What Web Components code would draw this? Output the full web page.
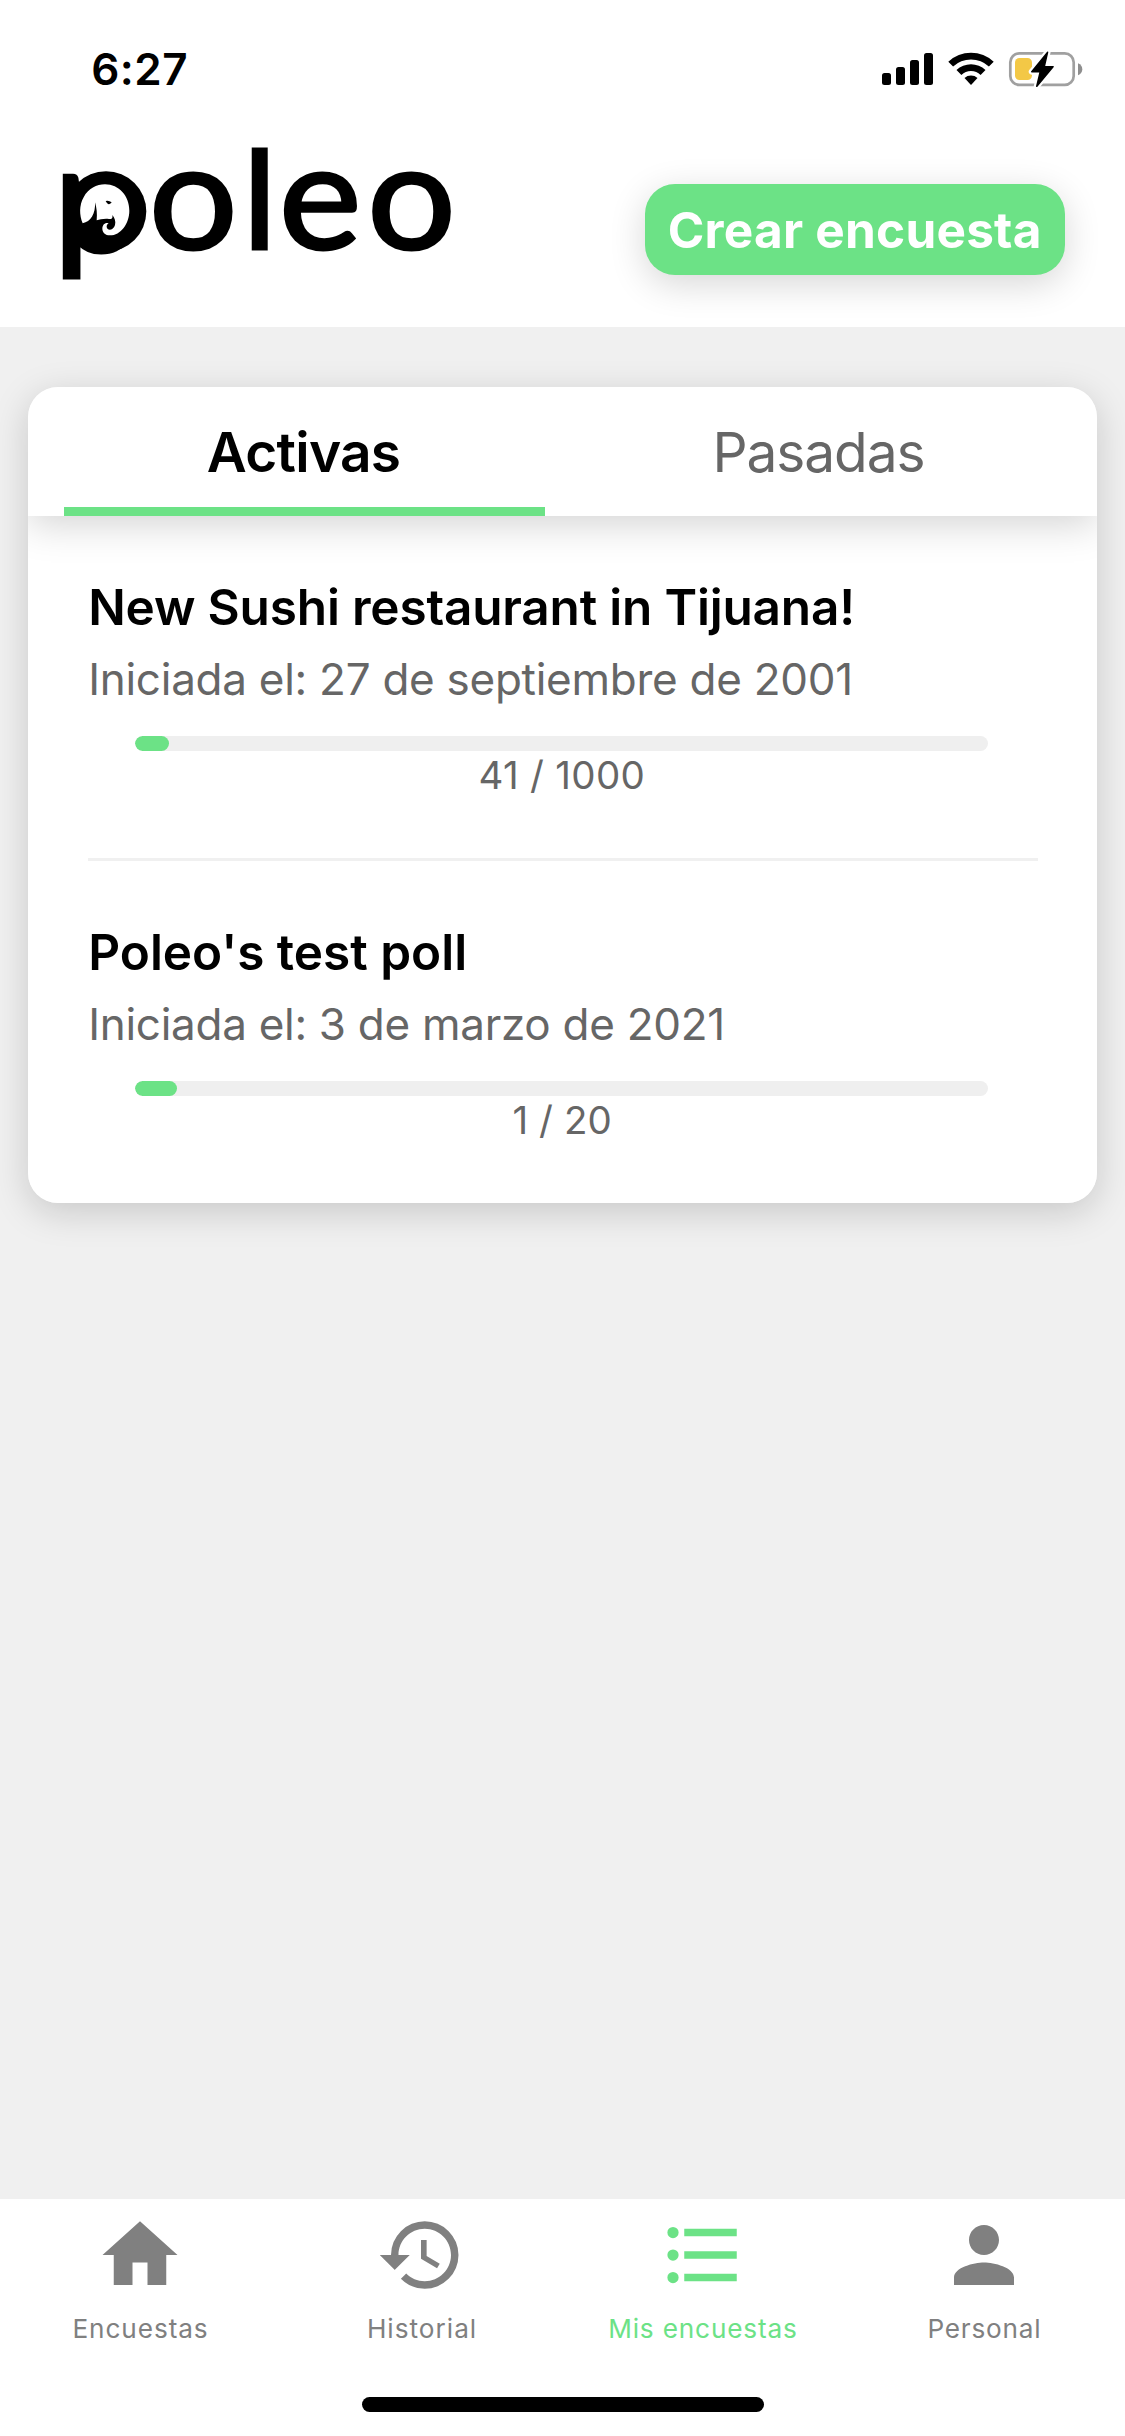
<!DOCTYPE html>
<html lang="es">
<head>
<meta charset="utf-8">
<title>Poleo</title>
<style>
  html, body { margin: 0; padding: 0; }
  body { width: 1125px; height: 2436px; overflow: hidden; background: #f0f0f0; font-family: Inter, "Liberation Sans", sans-serif; }
</style>
</head>
<body>
<poleo-app></poleo-app>
<script>
const pen = document.createElement('canvas').getContext('2d');
const FAMILY = 'Inter, "Liberation Sans", sans-serif';
const define = (name, html, connected) => {
  const tpl = document.createElement('template');
  tpl.innerHTML = html;
  customElements.define(name, class extends HTMLElement {
    constructor() {
      super();
      this.attachShadow({ mode: 'open' }).append(tpl.content.cloneNode(true));
    }
    connectedCallback() { if (connected) connected.call(this, this.shadowRoot); }
  });
};

/* One line of text whose box is its ink: cap height tall, `ink` pixels wide */
define('ink-text', `<style>
  :host { display: block; flex: none; white-space: nowrap; }
  span { display: block; }
</style><span></span>`, function (root) {
  const size = +this.getAttribute('size'), weight = this.getAttribute('weight') || 400;
  const ink = +this.getAttribute('ink'), text = this.getAttribute('text');
  pen.font = `${weight} ${size}px ${FAMILY}`;
  const m = pen.measureText(text);
  const natural = m.actualBoundingBoxLeft + m.actualBoundingBoxRight;
  const span = root.querySelector('span');
  span.textContent = text;
  const cap = Math.round(size * 0.727);
  const nudge = size > 40 ? 0.8 : 0;
  this.style.width = ink + 'px';
  this.style.height = cap + 'px';
  span.style.cssText = `font-size:${size}px;font-weight:${weight};line-height:${cap}px;letter-spacing:${(ink - natural) / (text.length - 1)}px;margin-left:${m.actualBoundingBoxLeft - nudge}px`;
});

define('status-bar', `<style>
  :host { display: flex; justify-content: space-between; align-items: flex-start; box-sizing: border-box; height: 132px; padding: 52px 41px 0 94px; }
  ink-text { margin-top: 1px; }
  svg { display: block; }
</style>
<ink-text text="6:27" size="44" weight="600" ink="93"></ink-text>
<svg width="202" height="38" viewBox="882 50 202 38" style="margin-top:-2px">
  <rect x="882" y="73" width="9" height="12" rx="2.5"/><rect x="896" y="67" width="9" height="18" rx="2.5"/>
  <rect x="910" y="60" width="9" height="25" rx="2.5"/><rect x="924" y="53" width="9" height="32" rx="2.5"/>
  <path d="M948.3 61.8a33 33 0 0 1 45.4 0l-4.8 4.8a26 26 0 0 0-35.8 0z"/>
  <path d="M956.5 70a21 21 0 0 1 29 0l-4.9 4.9a14 14 0 0 0-19.2 0z"/>
  <path d="M964.5 78a10 10 0 0 1 13 0l-6.5 6.9z"/>
  <rect x="1010.3" y="53.3" width="63.4" height="31.6" rx="9" fill="none" stroke="#a0a0a0" stroke-width="2.7"/>
  <path d="M1078 63.2q4.3 1.8 4.3 6t-4.3 6z" fill="#8e8e8e"/>
  <rect x="1015" y="58" width="17" height="22" rx="4.5" fill="#f3c846"/>
  <path d="M1047.5 52.4 1031.8 71.7H1040.3L1036.8 86.2 1053 66.7H1044.2z" stroke="#fff" stroke-width="6" stroke-linejoin="round"/>
  <path d="M1047.5 52.4 1031.8 71.7H1040.3L1036.8 86.2 1053 66.7H1044.2z" stroke="#000" stroke-width="1.6" stroke-linejoin="round"/>
</svg>`);

/* Wordmark with the elephant disc set in the bowl of the p */
define('poleo-logo', `<style>
  :host { display: block; }
  svg { display: block; overflow: visible; }
  text { font-family: Lato, "Liberation Sans", sans-serif; font-weight: 400; stroke: #000; stroke-width: 3; }
</style>
<svg width="400" height="150" viewBox="60 140 400 150">
  <text></text>
  <ellipse cx="106" cy="211.5" rx="40.3" ry="40.3"/>
  <g transform="translate(50 140) scale(.33333)">
    <path fill="#fff" d="M98 250C88 226 87 196 101 172C115 145 140 133 165 133C207 133 238 168 238 212C238 251 212 286 180 286C166 286 157 277 157 266C157 254 166 246 176 250C169 254 168 263 174 268C181 272 192 266 195 255C198 244 194 233 187 225C189 236 184 238 177 237C161 235 150 239 140 241C142 220 140 204 135 187C137 222 122 245 98 250z"/>
    <path d="M167 183Q176 180 185 187Q181 194 174 192Q169 188 167 183z"/>
  </g>
</svg>`, function (root) {
  const text = root.querySelector('text');
  pen.font = '400 1000px Lato, "Liberation Sans", sans-serif';
  const box = ch => {
    const m = pen.measureText(ch);
    return { l: m.actualBoundingBoxLeft, d: m.actualBoundingBoxDescent, w: m.actualBoundingBoxLeft + m.actualBoundingBoxRight, h: m.actualBoundingBoxAscent + m.actualBoundingBoxDescent };
  };
  const o = box('o'), p = box('p'), l = box('l');
  const round = 78 / o.h * 1000;
  const stretch = 78 / (o.w * round / 1000);
  const glyphs = [
    ['p', 104.5 / p.h * 1000, 63.2, 278.5],
    ['o', round, 153.8, 251],
    ['l', 101.5 / l.h * 1000, 251.8, 248.7],
    ['e', round, 283.8, 251],
    ['o', round, 372.2, 251]
  ];
  text.setAttribute('transform', `scale(${stretch} 1)`);
  for (const [ch, size, left, bottom] of glyphs) {
    const b = box(ch);
    const t = document.createElementNS('http://www.w3.org/2000/svg', 'tspan');
    t.textContent = ch;
    t.setAttribute('font-size', size);
    t.setAttribute('x', left / stretch + b.l * size / 1000);
    t.setAttribute('y', bottom - b.d * size / 1000);
    text.append(t);
  }
});

define('pill-button', `<style>
  :host { display: flex; align-items: center; justify-content: center; width: 420px; height: 91px; border-radius: 30px; background: #6ce286; color: #fff; box-shadow: 0 9px 36px rgba(0,0,0,.16); }
</style><slot></slot>`);

define('app-header', `<style>
  :host { display: block; height: 327px; background: #fff; overflow: hidden; color: #000; }
  .row { display: flex; justify-content: space-between; align-items: flex-start; padding: 8px 60px 0 60px; }
  pill-button { margin-top: 44px; }
</style>
<status-bar></status-bar>
<div class="row"><poleo-logo></poleo-logo>
<pill-button><ink-text text="Crear encuesta" size="49.5" weight="700" ink="369"></ink-text></pill-button></div>`);

define('tab-item', `<style>
  :host { display: flex; flex-direction: column; align-items: center; justify-content: center; box-sizing: border-box; width: 45%; height: 100%; border-bottom: 9px solid transparent; padding-top: 10px; color: #666; }
  :host([selected]) { color: #000; border-color: #6ce286; }
</style><slot></slot>`);

define('poll-row', `<style>
  :host { display: block; margin: 0 59.5px 0 60px; padding: 73px 0 69px; }
  :host([divided]) { border-bottom: 3px solid #f0f0f0; }
  .title { color: #000; margin: 0 0 38px 4px; }
  .date { color: #666; margin: 0 0 41px 4px; }
  .meter { width: 853px; margin-left: 47px; display: flex; flex-direction: column; align-items: center; gap: 10px; color: #666; }
  .track { width: 100%; height: 15px; border-radius: 7.5px; background: #efefef; overflow: hidden; }
  .fill { height: 15px; border-radius: 7.5px; background: #6ce286; }
</style>
<div class="title"><slot name="title"></slot></div>
<div class="date"><slot name="date"></slot></div>
<div class="meter"><div class="track"><div class="fill"></div></div><slot name="count"></slot></div>`,
function (root) { root.querySelector('.fill').style.width = this.getAttribute('fill') + 'px'; });

define('poll-card', `<style>
  :host { display: block; margin: 60px 28px 0; border-radius: 30px; box-shadow: 0 9px 36px rgba(0,0,0,.17); }
  .clip { border-radius: 30px; overflow: hidden; background: #fff; }
  .tabs { display: flex; justify-content: space-evenly; height: 129px; box-shadow: 0 9px 36px rgba(0,0,0,.17); }
</style>
<div class="clip"><div class="tabs"><slot name="tab"></slot></div><slot></slot></div>`);

const ICONS = {
  home: 'M10 20v-6h4v6h5v-8h3L12 3 2 12h3v8z',
  history: 'M13 3a9 9 0 0 0-9 9H1l3.89 3.89.07.14L9 12H6c0-3.87 3.13-7 7-7s7 3.13 7 7-3.13 7-7 7c-1.93 0-3.68-.79-4.94-2.06l-1.42 1.42A8.95 8.95 0 0 0 13 21a9 9 0 0 0 0-18zm-1 5v5l4.28 2.54.72-1.21-3.5-2.08V8H12z',
  list: 'M4 10.5a1.5 1.5 0 1 0 0 3 1.5 1.5 0 0 0 0-3zm0-6a1.5 1.5 0 1 0 0 3 1.5 1.5 0 0 0 0-3zm0 12a1.5 1.5 0 1 0 0 3 1.5 1.5 0 0 0 0-3zM7 19h14v-2H7v2zm0-6h14v-2H7v2zm0-8v2h14V5H7z',
  person: 'M12 12c2.21 0 4-1.79 4-4s-1.79-4-4-4-4 1.79-4 4 1.79 4 4 4zm0 2c-2.67 0-8 1.34-8 4v2h16v-2c0-2.66-5.33-4-8-4z'
};
define('nav-item', `<style>
  :host { display: flex; flex: 1 1 0; flex-direction: column; align-items: center; gap: 19px; color: #808080; }
  :host([selected]) { color: #6ce286; }
  svg { display: block; width: 90px; height: 90px; fill: currentColor; margin-left: -1px; }
</style><svg viewBox="0 0 24 24"><path/></svg><slot></slot>`,
function (root) { root.querySelector('path').setAttribute('d', ICONS[this.getAttribute('icon')]); });

define('nav-bar', `<style>
  :host { display: flex; flex-direction: column; align-items: center; box-sizing: border-box; height: 237px; padding: 11px 0 24px; background: #fff; justify-content: space-between; }
  nav { display: flex; width: 100%; }
  .indicator { width: 402px; height: 15px; border-radius: 7.5px; background: #000; }
</style><nav><slot></slot></nav><div class="indicator"></div>`);

define('poleo-app', `<style>
  :host { display: flex; flex-direction: column; width: 1125px; height: 2436px; background: #f0f0f0; }
  main { flex: 1; display: flow-root; }
</style>
<app-header></app-header>
<main><poll-card>
  <tab-item slot="tab" selected><ink-text text="Activas" size="55" weight="600" ink="191"></ink-text></tab-item>
  <tab-item slot="tab"><ink-text text="Pasadas" size="55" ink="207"></ink-text></tab-item>
  <poll-row divided fill="34">
    <ink-text slot="title" text="New Sushi restaurant in Tijuana!" size="49.5" weight="600" ink="760"></ink-text>
    <ink-text slot="date" text="Iniciada el: 27 de septiembre de 2001" size="44" ink="759"></ink-text>
    <ink-text slot="count" text="41 / 1000" size="38.5" ink="162"></ink-text>
  </poll-row>
  <poll-row fill="42">
    <ink-text slot="title" text="Poleo's test poll" size="49.5" weight="600" ink="373"></ink-text>
    <ink-text slot="date" text="Iniciada el: 3 de marzo de 2021" size="44" ink="631"></ink-text>
    <ink-text slot="count" text="1 / 20" size="38.5" ink="96"></ink-text>
  </poll-row>
</poll-card></main>
<nav-bar>
  <nav-item icon="home"><ink-text text="Encuestas" size="26.2" ink="132.5"></ink-text></nav-item>
  <nav-item icon="history"><ink-text text="Historial" size="26.2" ink="106"></ink-text></nav-item>
  <nav-item icon="list" selected><ink-text text="Mis encuestas" size="26.2" ink="186"></ink-text></nav-item>
  <nav-item icon="person"><ink-text text="Personal" size="26.2" ink="110"></ink-text></nav-item>
</nav-bar>`);
</script>
</body>
</html>
